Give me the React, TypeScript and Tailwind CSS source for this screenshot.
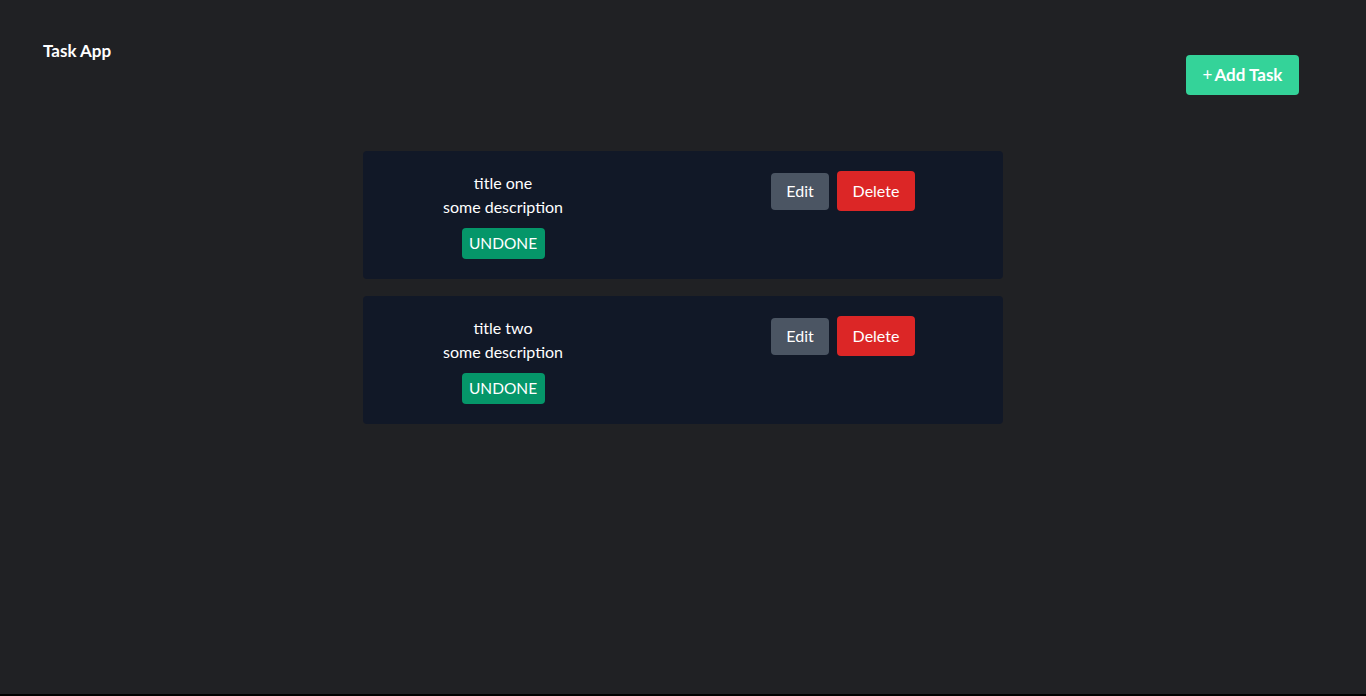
const tasks = [
  { id: 1, title: 'title one', description: 'some description', done: false },
  { id: 2, title: 'title two', description: 'some description', done: false },
];

function TaskCard({ title, description, done }: { title: string; description: string; done: boolean }) {
  return (
    <div className="flex items-start rounded bg-[#111827] pt-5 pb-5">
      <div className="flex w-[280px] flex-col items-center text-center text-white">
        <span>{title}</span>
        <span>{description}</span>
        <span className="mt-[9px] w-[83px] rounded bg-[#059669] py-[4px] text-[15.5px] leading-[23px]">
          {done ? 'DONE' : 'UNDONE'}
        </span>
      </div>
      <div className="ml-32 flex items-center gap-2">
        <button className="h-[37px] w-[58px] rounded bg-[#4b5563] text-white">Edit</button>
        <button className="h-10 w-[78px] rounded bg-[#dc2626] text-white">Delete</button>
      </div>
    </div>
  );
}

export default function App() {
  return (
    <div
      className="flex h-[696px] flex-col border-b-2 border-black bg-[#202124] text-base leading-6"
      style={{ fontFamily: 'Lato, "Noto Sans", sans-serif' }}
    >
      <header className="flex items-start justify-between pl-[43px] pr-[67px]">
        <h1 className="mt-[39px] text-[17px] font-bold text-white">Task App</h1>
        <button className="mt-[55px] flex h-10 w-[113px] items-center justify-center gap-0.5 rounded bg-[#34d399] text-[17px] font-bold text-white">
          <span className="font-normal">+</span>Add Task
        </button>
      </header>

      <main className="mx-auto mt-[56px] flex w-[640px] flex-col gap-[17px]">
        {tasks.map((t) => (
          <TaskCard key={t.id} {...t} />
        ))}
      </main>
    </div>
  );
}
